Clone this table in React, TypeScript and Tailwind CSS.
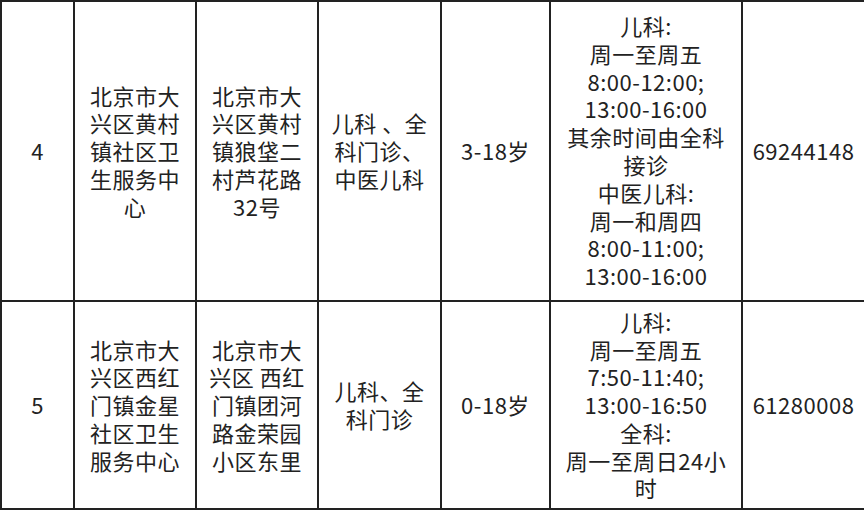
const ROWS = [
  {
    no: "4",
    name: ["北京市大", "兴区黄村", "镇社区卫", "生服务中", "心"],
    addr: ["北京市大", "兴区黄村", "镇狼垡二", "村芦花路", "32号"],
    dept: ["儿科 、全", "科门诊、", "中医儿科"],
    age: "3-18岁",
    hours: [
      "儿科:",
      "周一至周五",
      "8:00-12:00;",
      "13:00-16:00",
      "其余时间由全科",
      "接诊",
      "中医儿科:",
      "周一和周四",
      "8:00-11:00;",
      "13:00-16:00",
    ],
    phone: "69244148",
  },
  {
    no: "5",
    name: ["北京市大", "兴区西红", "门镇金星", "社区卫生", "服务中心"],
    addr: ["北京市大", "兴区 西红", "门镇团河", "路金荣园", "小区东里"],
    dept: ["儿科、全", "科门诊"],
    age: "0-18岁",
    hours: [
      "儿科:",
      "周一至周五",
      "7:50-11:40;",
      "13:00-16:50",
      "全科:",
      "周一至周日24小",
      "时",
    ],
    phone: "61280008",
  },
];

function Cell({ lines }: { lines: string[] | string }) {
  const list = Array.isArray(lines) ? lines : [lines];
  return (
    <div className="border-l-2 border-t-2 border-[#222] flex flex-col items-center justify-center text-center px-1">
      {list.map((l, i) => (
        <span key={i} className="whitespace-pre leading-[27.8px]">
          {l}
        </span>
      ))}
    </div>
  );
}

export default function App() {
  return (
    <div
      className="w-[864px] h-[510px] bg-white overflow-hidden text-[#222] text-[22px] font-normal tracking-[0.5px]"
      style={{ fontFamily: '"Noto Sans CJK SC", "Noto Sans", sans-serif' }}
    >
      <div className="grid grid-cols-[73px_122px_122px_123px_109px_192px_123px] grid-rows-[300px_208px] border-b-2 border-[#222]">
        {ROWS.map((r) => (
          <>
            <Cell key={r.no + "a"} lines={r.no} />
            <Cell key={r.no + "b"} lines={r.name} />
            <Cell key={r.no + "c"} lines={r.addr} />
            <Cell key={r.no + "d"} lines={r.dept} />
            <Cell key={r.no + "e"} lines={r.age} />
            <Cell key={r.no + "f"} lines={r.hours} />
            <Cell key={r.no + "g"} lines={r.phone} />
          </>
        ))}
      </div>
    </div>
  );
}
